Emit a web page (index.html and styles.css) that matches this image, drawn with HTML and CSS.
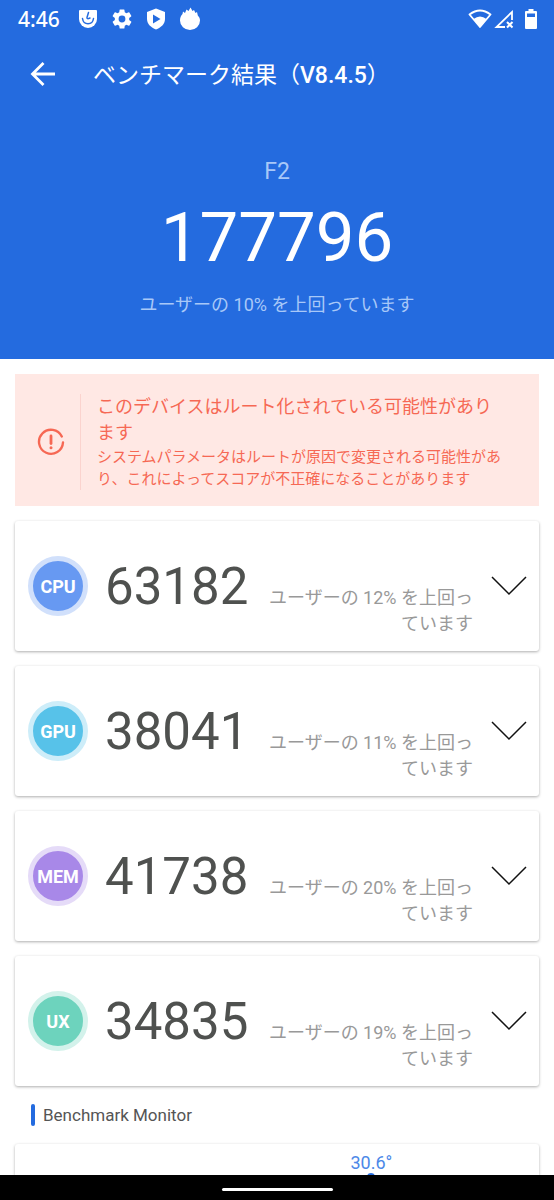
FILE: index.html
```html
<!DOCTYPE html>
<html lang="ja">
<head>
<meta charset="utf-8">
<meta name="viewport" content="width=device-width, initial-scale=1">
<title>ベンチマーク結果</title>
<link rel="stylesheet" href="styles.css">
</head>
<body>
<div class="screen">
  <header class="hero">
    <div class="status">
      <time class="clock">4:46</time>
      <div class="notifications">
        <svg width="20" height="22" viewBox="0 0 20 22" aria-hidden="true"><path fill="#fff" d="M2 2h16a1 1 0 0 1 1 1v8a9 9 0 0 1-18 0V3a1 1 0 0 1 1-1z"/><path fill="none" stroke="#246bdf" stroke-width="1.500" stroke-linecap="round" d="M10.500 4.500 9 9.500q-.3 2 3 .5M4.500 10.500c1 7 10 7 11 0"/></svg>
        <svg width="22" height="22" viewBox="1 1 22 22" aria-hidden="true"><path fill="#fff" d="M19.140 12.940c.04-.3.060-.61.060-.94s-.02-.64-.07-.94l2.030-1.580a.5.5 0 0 0 .12-.61l-1.920-3.320a.5.5 0 0 0-.59-.22l-2.390.96a7 7 0 0 0-1.620-.94l-.36-2.540a.5.5 0 0 0-.48-.41h-3.840a.5.5 0 0 0-.47.41l-.36 2.540a7.200 7.200 0 0 0-1.620.94l-2.390-.96a.5.5 0 0 0-.59.22L2.740 8.870a.5.5 0 0 0 .12.610l2.030 1.580a6 6 0 0 0 0 1.880l-2.030 1.580a.5.5 0 0 0-.12.610l1.920 3.320c.12.220.37.290.59.220l2.390-.96c.5.380 1.030.7 1.620.94l.36 2.540c.05.240.24.410.48.410h3.840c.24 0 .44-.17.470-.41l.36-2.540a7 7 0 0 0 1.620-.94l2.390.96c.22.080.47 0 .59-.22l1.920-3.320a.5.5 0 0 0-.12-.61zM12 15.400a3.400 3.400 0 1 1 0-6.800 3.400 3.400 0 0 1 0 6.800z"/></svg>
        <svg width="20" height="22" viewBox="0 0 20 22" aria-hidden="true"><path fill="#fff" d="M10 .5 19 4v7c0 5-4 8.500-9 10.500C5 19.500 1 16 1 11V4z"/><path fill="#246bdf" d="m7 6.500 7.500 4.500L7 15.500z"/></svg>
        <svg width="22" height="24" viewBox="0 0 22 24" aria-hidden="true"><path fill="#fff" d="M4 4.500 6 6l1.500-3.500L9.500 4l2-3.500 2 3.500L15 3l1.500 3L18 5l.8 3.500c1.500 1.500 2.200 3 2.200 5a10 9.500 0 0 1-20 0c0-3 1-5 2.500-6.500z"/></svg>
      </div>
      <div class="system">
        <svg width="24" height="20" viewBox="0 0 24 20" aria-hidden="true"><path fill="none" stroke="#fff" stroke-width="1.800" stroke-linejoin="round" d="M1.500 5.500q10.500-8 21 0L12 18z"/><path fill="#fff" d="M5.500 10q6.500-5 13 0L12 18z"/></svg>
        <svg width="20" height="20" viewBox="0 0 20 20" aria-hidden="true"><path fill="none" stroke="#fff" stroke-width="1.800" d="M18 11V3L2.500 18H11"/><path stroke="#fff" stroke-width="2" d="m13 13 5.500 5.500m0-5.500L13 18.500"/></svg>
        <svg class="battery" width="14" height="20" viewBox="0 0 14 20" aria-hidden="true"><path fill="#fff" fill-rule="evenodd" d="M4.500 0h5v2H12a1 1 0 0 1 1 1v16a1 1 0 0 1-1 1H2a1 1 0 0 1-1-1V3a1 1 0 0 1 1-1h2.500zM3 4.500V8h8V4.500z"/></svg>
      </div>
    </div>
    <div class="toolbar">
      <button class="back" aria-label="戻る"><svg width="26" height="26" viewBox="0 0 26 26" aria-hidden="true"><path fill="none" stroke="#fff" stroke-width="2.800" d="M25 13H3M13.500 2 2.500 13l11 11"/></svg></button>
      <h1 class="title">ベンチマーク結果（<span class="version">V8.4.5</span>）</h1>
    </div>
    <div class="summary">
      <p class="device">F2</p>
      <p class="total">177796</p>
      <p class="rank">ユーザーの 10% を上回っています</p>
    </div>
  </header>

  <main class="content">
    <section class="alert">
      <div class="alert-mark"><svg width="28" height="28" viewBox="0 0 28 28" aria-hidden="true"><g fill="none" stroke="#f66854" stroke-width="2.400" stroke-linecap="round"><path d="M24.800 8.500A12 12 0 1 0 26 14.500"/><path stroke-width="2.800" d="M14 8v7.500"/></g><circle cx="14" cy="19.800" r="1.500" fill="#f66854"/></svg></div>
      <div class="alert-text">
        <h2 class="alert-title">このデバイスはルート化されている可能性があります</h2>
        <p class="alert-detail">システムパラメータはルートが原因で変更される可能性があり、これによってスコアが不正確になることがあります</p>
      </div>
    </section>

    <article class="card score">
      <div class="badge cpu">CPU</div>
      <div class="result"><strong class="points">63182</strong><p class="compare">ユーザーの 12% を上回っています</p></div>
      <button class="expand" aria-label="CPU の詳細"><svg width="36" height="20" viewBox="0 0 36 20" aria-hidden="true"><path d="m1 1 17 17L35 1"/></svg></button>
    </article>
    <article class="card score">
      <div class="badge gpu">GPU</div>
      <div class="result"><strong class="points">38041</strong><p class="compare">ユーザーの 11% を上回っています</p></div>
      <button class="expand" aria-label="GPU の詳細"><svg width="36" height="20" viewBox="0 0 36 20" aria-hidden="true"><path d="m1 1 17 17L35 1"/></svg></button>
    </article>
    <article class="card score">
      <div class="badge mem">MEM</div>
      <div class="result"><strong class="points">41738</strong><p class="compare">ユーザーの 20% を上回っています</p></div>
      <button class="expand" aria-label="MEM の詳細"><svg width="36" height="20" viewBox="0 0 36 20" aria-hidden="true"><path d="m1 1 17 17L35 1"/></svg></button>
    </article>
    <article class="card score">
      <div class="badge ux">UX</div>
      <div class="result"><strong class="points">34835</strong><p class="compare">ユーザーの 19% を上回っています</p></div>
      <button class="expand" aria-label="UX の詳細"><svg width="36" height="20" viewBox="0 0 36 20" aria-hidden="true"><path d="m1 1 17 17L35 1"/></svg></button>
    </article>

    <h2 class="section-title">Benchmark Monitor</h2>
    <section class="card monitor">
      <div class="reading"><span>30.6°</span><i class="point"></i></div>
    </section>
  </main>

  <footer class="navbar"><div class="handle"></div></footer>
</div>
</body>
</html>
```
FILE: styles.css
```css
* { box-sizing: border-box; }
body, h1, h2, p { margin: 0; font-weight: 400; }
body { font-family: Roboto, "Noto Sans CJK JP", sans-serif; background: #fff; }
svg { display: block; flex: none; }
button { padding: 0; border: 0; background: none; cursor: pointer; }

.screen { display: flex; flex-direction: column; height: 100vh; overflow: hidden; }

.hero { flex: none; padding-bottom: 38px; background: #246bdf; color: #fff; }
.status { display: flex; align-items: center; height: 38px; padding: 0 16px 0 18px; }
.clock { font-family: "Noto Sans", sans-serif; font-size: 21px; line-height: 28px; font-weight: 500; }
.notifications { display: flex; align-items: center; gap: 13px; margin-left: 18px; }
.system { display: flex; align-items: center; gap: 2px; margin-left: auto; }
.battery { margin-left: 8px; }

.toolbar { display: flex; align-items: center; gap: 37px; height: 72px; padding: 0 30px; }
.title { font-size: 23px; line-height: 34px; padding-top: 3px; }
.version { font-weight: 500; }

.summary { display: flex; flex-direction: column; align-items: center; padding-top: 47px; }
.device { font-size: 23px; line-height: 30px; color: #a8c8f8; }
.total { font-size: 69px; line-height: 102px; }
.rank { font-size: 18px; line-height: 32px; color: #a8c8f8; }

.content { flex: 1; min-height: 0; overflow: hidden; display: flex; flex-direction: column; gap: 15px; padding: 15px 15px 0; }
.content > * { flex: none; }

.alert { display: flex; align-items: center; min-height: 132px; padding: 20px 30px 16px 22px; background: #ffe8e4; color: #f66854; }
.alert-mark { align-self: stretch; display: flex; align-items: center; padding-right: 15px; border-right: 1px solid #fbd3ce; }
.alert-text { flex: 1; padding-left: 16px; }
.alert-title { font-size: 18px; line-height: 26px; }
.alert-detail { font-size: 15px; line-height: 22px; }

.card { border-radius: 3px; background: #fff; box-shadow: 0 1px 3px rgba(0, 0, 0, .32); }
.score { display: flex; align-items: center; height: 130px; padding: 0 12px 0 13px; }
.badge { flex: none; display: grid; place-items: center; width: 60px; height: 60px; border: 5px solid; border-radius: 50%; color: #fff; font-size: 18px; font-weight: 700; }
.cpu { background: #6799f2; border-color: #d1e0fb; }
.gpu { background: #57c2e9; border-color: #cdedf9; }
.mem { background: #a888e8; border-color: #e5dbf8; }
.ux { background: #6dd3bd; border-color: #d3f2eb; }
.result { flex: 1; align-self: flex-start; display: flex; align-items: baseline; gap: 16px; padding: 36px 18px 0 17px; }
.points { font-size: 51px; line-height: 60px; font-weight: 400; color: #4f514f; }
.compare { flex: 1; font-size: 18px; line-height: 26px; text-align: right; color: #999; }
.expand path { fill: none; stroke: #111; stroke-width: 1.5; }

.section-title { display: flex; align-items: center; gap: 8px; height: 28px; padding-left: 16px; font-size: 17px; color: #555; }
.section-title::before { content: ""; width: 4px; height: 22px; border-radius: 2px; background: #246bdf; }
.monitor { height: 31px; border-radius: 3px 3px 0 0; padding-top: 8px; }
.reading { display: flex; flex-direction: column; align-items: center; width: 42px; margin-left: 64%; font-size: 18px; line-height: 21px; color: #4c88e8; }
.point { width: 8px; height: 8px; border-radius: 50%; background: #246bdf; }

.navbar { flex: none; display: flex; align-items: center; justify-content: center; height: 25px; padding-top: 3px; background: #000; }
.handle { width: 111px; height: 3px; border-radius: 2px; background: #fff; }
```
